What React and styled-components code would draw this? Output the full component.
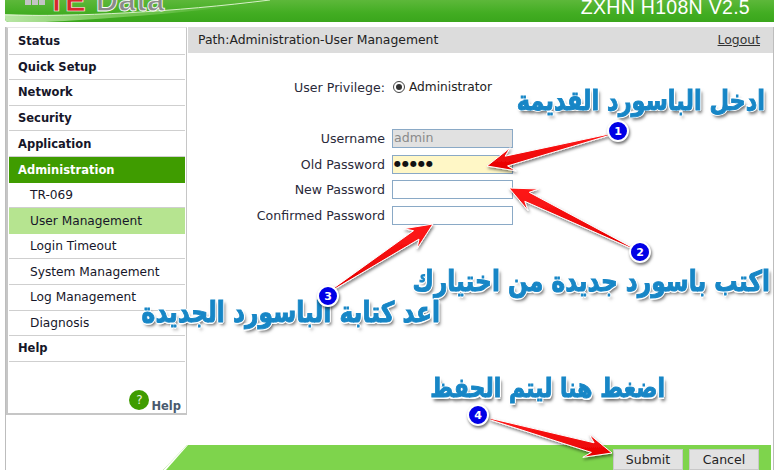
import React from "react";
import styled, { createGlobalStyle } from "styled-components";

const Global = createGlobalStyle`
  html, body { margin: 0; padding: 0; background: #fff; }
  body { width: 780px; height: 470px; overflow: hidden; font-family: "DejaVu Sans", Verdana, sans-serif; }
`;

const Page = styled.div`
  position: relative;
  width: 780px;
  height: 470px;
  overflow: hidden;
  display: flex;
  flex-direction: column;
  padding-left: 5px;
  box-sizing: border-box;
`;

const Header = styled.header`
  position: relative;
  width: 769px;
  height: 22px;
  flex: none;
  overflow: hidden;
  display: flex;
  align-items: flex-end;
  justify-content: space-between;
  box-sizing: border-box;
  padding: 0 24px 8px 20px;
  border-bottom-left-radius: 4px;
  background: linear-gradient(180deg, #5db83a 0%, #42ad22 60%, #3aa61c 100%);
`;

const Swoosh = styled.svg`
  position: absolute;
  left: 0;
  top: 0;
  width: 769px;
  height: 22px;
`;

const Logo = styled.div`
  position: relative;
  display: flex;
  align-items: flex-end;
  gap: 2px;
  margin-bottom: 6px;
  font-family: "Liberation Sans", Arial, sans-serif;
  font-weight: 700;
  font-size: 31px;
  line-height: 14px;
`;

const LogoDots = styled.div`
  display: grid;
  grid-template-columns: repeat(3, 6px);
  gap: 1px;
  margin-bottom: 3px;
`;

const LogoDot = styled.span`
  width: 6px;
  height: 6px;
  background: #c4c4c4;
`;

const LogoTE = styled.span`
  color: #d8262c;
  -webkit-text-stroke: 0.6px #fff;
  margin-right: 9px;
  letter-spacing: -1px;
`;

const LogoData = styled.span`
  color: #8a8a8a;
  -webkit-text-stroke: 0.8px #fff;
  letter-spacing: 0.5px;
`;

const Model = styled.div`
  position: relative;
  color: #fff;
  font-family: "Liberation Sans", Arial, sans-serif;
  font-size: 19.5px;
  line-height: 14px;
  letter-spacing: 0.3px;
`;

const Frame = styled.div`
  flex: 1;
  width: 769px;
  margin-top: 5px;
  box-sizing: border-box;
  border-left: 1px solid #bdbdbd;
  border-right: 1px solid #bdbdbd;
  display: flex;
  flex-direction: column;
  color: #222;
  font-size: 12.6px;
`;

const Body = styled.div`
  display: flex;
  height: 388px;
  flex: none;
`;

const Sidebar = styled.nav`
  width: 181px;
  flex: none;
  box-sizing: border-box;
  border: 1px solid #c6c6c6;
  border-width: 0 2px 2px 2px;
  border-right-width: 1px;
  padding: 1px 1px 0;
  background: #fff;
  position: relative;
  border-top: 1px solid #e6e6e6;
`;

const MenuItem = styled.div`
  height: 25.6px;
  box-sizing: border-box;
  display: flex;
  align-items: center;
  padding-left: ${(p) => (p.$sub ? "21px" : "9px")};
  font-size: ${(p) => (p.$sub ? "12.2px" : "11.5px")};
  font-weight: ${(p) => (p.$sub ? 400 : 700)};
  color: ${(p) => (p.$active ? "#fff" : "#161629")};
  background: ${(p) => (p.$active ? "#3f9c00" : p.$current ? "#b6e490" : "#fff")};
  border-bottom: ${(p) => (p.$plain ? "none" : "1.5px solid #cfcfcf")};
`;

const SideHelp = styled.div`
  position: absolute;
  right: 5px;
  bottom: 0;
  display: flex;
  align-items: flex-end;
  gap: 2px;
  color: #4a5a6e;
  font-size: 11.5px;
  font-weight: 700;
`;

const HelpDot = styled.span`
  width: 20px;
  height: 20px;
  border-radius: 50%;
  background: #3f9c00;
  color: #e6f4dc;
  font-size: 12px;
  font-weight: 400;
  display: flex;
  align-items: center;
  justify-content: center;
  margin-bottom: 3px;
`;

const Main = styled.main`
  flex: 1;
  display: flex;
  flex-direction: column;
`;

const PathBar = styled.div`
  height: 25px;
  margin-left: 1px;
  flex: none;
  background: #dcdcdc;
  display: flex;
  align-items: center;
  justify-content: space-between;
  padding: 0 13px 1px 10px;
  font-size: 12.4px;
`;

const Logout = styled.a`
  text-decoration: underline;
  color: #333;
`;

const Privilege = styled.div`
  display: grid;
  grid-template-columns: 198px auto;
  column-gap: 8px;
  align-items: center;
  margin-top: 24px;
  height: 20px;
`;

const Form = styled.div`
  display: grid;
  grid-template-columns: 198px 121px;
  column-gap: 7px;
  grid-auto-rows: 25.6px;
  align-items: center;
  margin-top: 29px;
`;

const Label = styled.label`
  text-align: right;
  color: #2a2a3a;
`;

const RadioRow = styled.div`
  display: flex;
  align-items: center;
  gap: 4px;
  font-size: 12.2px;
`;

const Radio = styled.span`
  width: 10px;
  height: 10px;
  border-radius: 50%;
  border: 1px solid #444;
  background: #fff;
  display: flex;
  align-items: center;
  justify-content: center;
  &::after {
    content: "";
    width: 6px;
    height: 6px;
    border-radius: 50%;
    background: #333;
  }
`;

const Field = styled.div`
  height: 19px;
  box-sizing: border-box;
  border: 1px solid #8aa9c6;
  background: ${(p) => p.$bg || "#fff"};
  color: ${(p) => p.$fg || "#222"};
  padding-left: 1px;
  font-size: ${(p) => p.$size || "12.6px"};
  line-height: 16px;
  letter-spacing: ${(p) => p.$spacing || "0"};
  overflow: hidden;
`;

const Footer = styled.footer`
  margin-top: 30px;
  height: 25px;
  flex: none;
  margin-left: 157px;
  margin-right: 2px;
  background: #7ed44c;
  clip-path: polygon(24px 0, 100% 0, 100% 100%, 0 100%);
  display: flex;
  justify-content: flex-end;
  gap: 6px;
  padding: 4px 12px 0 0;
  box-sizing: border-box;
  position: relative;
`;

const Slash = styled.span`
  position: absolute;
  left: 0;
  top: 0;
  width: 42px;
  height: 25px;
  background: #fff;
  clip-path: polygon(22px 0, 25px 0, 3px 100%, 0 100%);
`;

const Button = styled.button`
  width: 70px;
  height: 21px;
  border: 1px solid #c8c8c8;
  background: #e2e2e2;
  color: #222;
  font-family: "DejaVu Sans", Verdana, sans-serif;
  font-size: 12.5px;
  padding: 0;
`;

const Overlay = styled.svg`
  position: absolute;
  left: 0;
  top: 0;
  width: 780px;
  height: 470px;
  pointer-events: none;
`;

const Note = styled.div`
  position: absolute;
  right: ${(p) => p.$right}px;
  top: ${(p) => p.$top}px;
  direction: rtl;
  white-space: nowrap;
  color: #1786c6;
  font-family: "DejaVu Sans", sans-serif;
  font-weight: 700;
  font-size: ${(p) => p.$size}px;
  line-height: 1.2;
  transform: scaleY(1.22);
  -webkit-text-stroke: 0.8px #1786c6;
  text-shadow: 1.5px 0 0 #fff, -1.5px 0 0 #fff, 0 1.5px 0 #fff, 0 -1.5px 0 #fff, 1px 1px 0 #fff, -1px -1px 0 #fff, 1px -1px 0 #fff, -1px 1px 0 #fff, 2px 3px 3px rgba(0,0,0,.6);
`;

const Badge = styled.span`
  position: absolute;
  left: ${(p) => p.$x - 11}px;
  top: ${(p) => p.$y - 11}px;
  width: 22px;
  height: 22px;
  box-sizing: border-box;
  border-radius: 50%;
  border: 2px solid #fff;
  background: #0000e6;
  color: #fff;
  font-family: "DejaVu Sans", sans-serif;
  font-size: 11px;
  font-weight: 700;
  display: flex;
  align-items: center;
  justify-content: center;
  box-shadow: 1px 2px 3px rgba(0,0,0,.55);
`;

const menu = [
  { t: "Status" },
  { t: "Quick Setup" },
  { t: "Network" },
  { t: "Security" },
  { t: "Application" },
  { t: "Administration", active: true, plain: true },
  { t: "TR-069", sub: true },
  { t: "User Management", sub: true, current: true, plain: true },
  { t: "Login Timeout", sub: true },
  { t: "System Management", sub: true },
  { t: "Log Management", sub: true },
  { t: "Diagnosis", sub: true },
  { t: "Help" },
];

const arrowPoints = ([x0, y0], [x1, y1]) => {
  const dx = x1 - x0, dy = y1 - y0;
  const len = Math.hypot(dx, dy);
  const ux = dx / len, uy = dy / len;
  const nx = -uy, ny = ux;
  const at = (d, w) => `${(x0 + ux * d + nx * w).toFixed(1)},${(y0 + uy * d + ny * w).toFixed(1)}`;
  return [
    at(0, 0.7), at(len - 20, 5), at(len - 27, 12), at(len, 0),
    at(len - 27, -12), at(len - 20, -5), at(0, -0.7),
  ].join(" ");
};

const arrows = [
  [[608, 135], [487, 166]],
  [[630, 247], [509, 188]],
  [[335, 288], [433, 224]],
  [[490, 419], [612, 453]],
];

export default function App() {
  return (
    <>
      <Global />
      <Page>
        <Header>
          <Swoosh viewBox="0 0 769 22" preserveAspectRatio="none">
            <defs>
              <linearGradient id="band" x1="0" y1="0" x2="1" y2="0">
                <stop offset="0" stopColor="#b9e6a6" />
                <stop offset="0.35" stopColor="#7fcb5f" />
                <stop offset="1" stopColor="#42ad22" />
              </linearGradient>
            </defs>
            <path d="M0 22 V14 C70 17 170 13 265 0 C190 14 90 19 40 22 Z" fill="url(#band)" />
            <path d="M0 15 C70 17 170 12 265 0" stroke="#d8f0c8" strokeWidth="1" fill="none" />
          </Swoosh>
          <Logo>
            <LogoDots>
              <LogoDot /><LogoDot /><LogoDot />
              <LogoDot /><LogoDot /><LogoDot />
            </LogoDots>
            <LogoTE>TE</LogoTE>
            <LogoData>Data</LogoData>
          </Logo>
          <Model>ZXHN H108N V2.5</Model>
        </Header>
        <Frame>
          <Body>
            <Sidebar>
              {menu.map((m) => (
                <MenuItem key={m.t} $sub={m.sub} $active={m.active} $current={m.current} $plain={m.plain}>
                  {m.t}
                </MenuItem>
              ))}
              <SideHelp>
                <HelpDot>?</HelpDot>
                Help
              </SideHelp>
            </Sidebar>
            <Main>
              <PathBar>
                <span>Path:Administration-User Management</span>
                <Logout>Logout</Logout>
              </PathBar>
              <Privilege>
                <Label>User Privilege:</Label>
                <RadioRow>
                  <Radio />
                  Administrator
                </RadioRow>
              </Privilege>
              <Form>
                <Label>Username</Label>
                <Field $bg="#e1e1e1" $fg="#8a8a8a">admin</Field>
                <Label>Old Password</Label>
                <Field $bg="#fff7c6" $fg="#111" $size="8px" $spacing="1px">●●●●●</Field>
                <Label>New Password</Label>
                <Field />
                <Label>Confirmed Password</Label>
                <Field />
              </Form>
            </Main>
          </Body>
          <Footer>
            <Slash />
            <Button>Submit</Button>
            <Button>Cancel</Button>
          </Footer>
        </Frame>
        <Overlay viewBox="0 0 780 470">
          <defs>
            <linearGradient id="red" x1="0" y1="0" x2="0" y2="1">
              <stop offset="0" stopColor="#ff1a1a" />
              <stop offset="1" stopColor="#e60000" />
            </linearGradient>
            <filter id="sh" x="-20%" y="-20%" width="140%" height="140%">
              <feDropShadow dx="1" dy="2" stdDeviation="1.5" floodColor="#000" floodOpacity="0.5" />
            </filter>
          </defs>
          {arrows.map(([a, b], i) => (
            <polygon key={i} points={arrowPoints(a, b)} fill="url(#red)" stroke="#fff" strokeWidth="1" filter="url(#sh)" />
          ))}
        </Overlay>
        <Note $right={15} $top={87} $size={22.5}>ادخل الباسورد القديمة</Note>
        <Note $right={10} $top={267} $size={23.3}>اكتب باسورد جديدة من اختيارك</Note>
        <Note $right={340} $top={298} $size={23.4}>اعد كتابة الباسورد الجديدة</Note>
        <Note $right={115} $top={376} $size={22}>اضغط هنا ليتم الحفظ</Note>
        <Badge $x={618} $y={131}>1</Badge>
        <Badge $x={640} $y={252}>2</Badge>
        <Badge $x={328} $y={296}>3</Badge>
        <Badge $x={478} $y={415}>4</Badge>
      </Page>
    </>
  );
}
